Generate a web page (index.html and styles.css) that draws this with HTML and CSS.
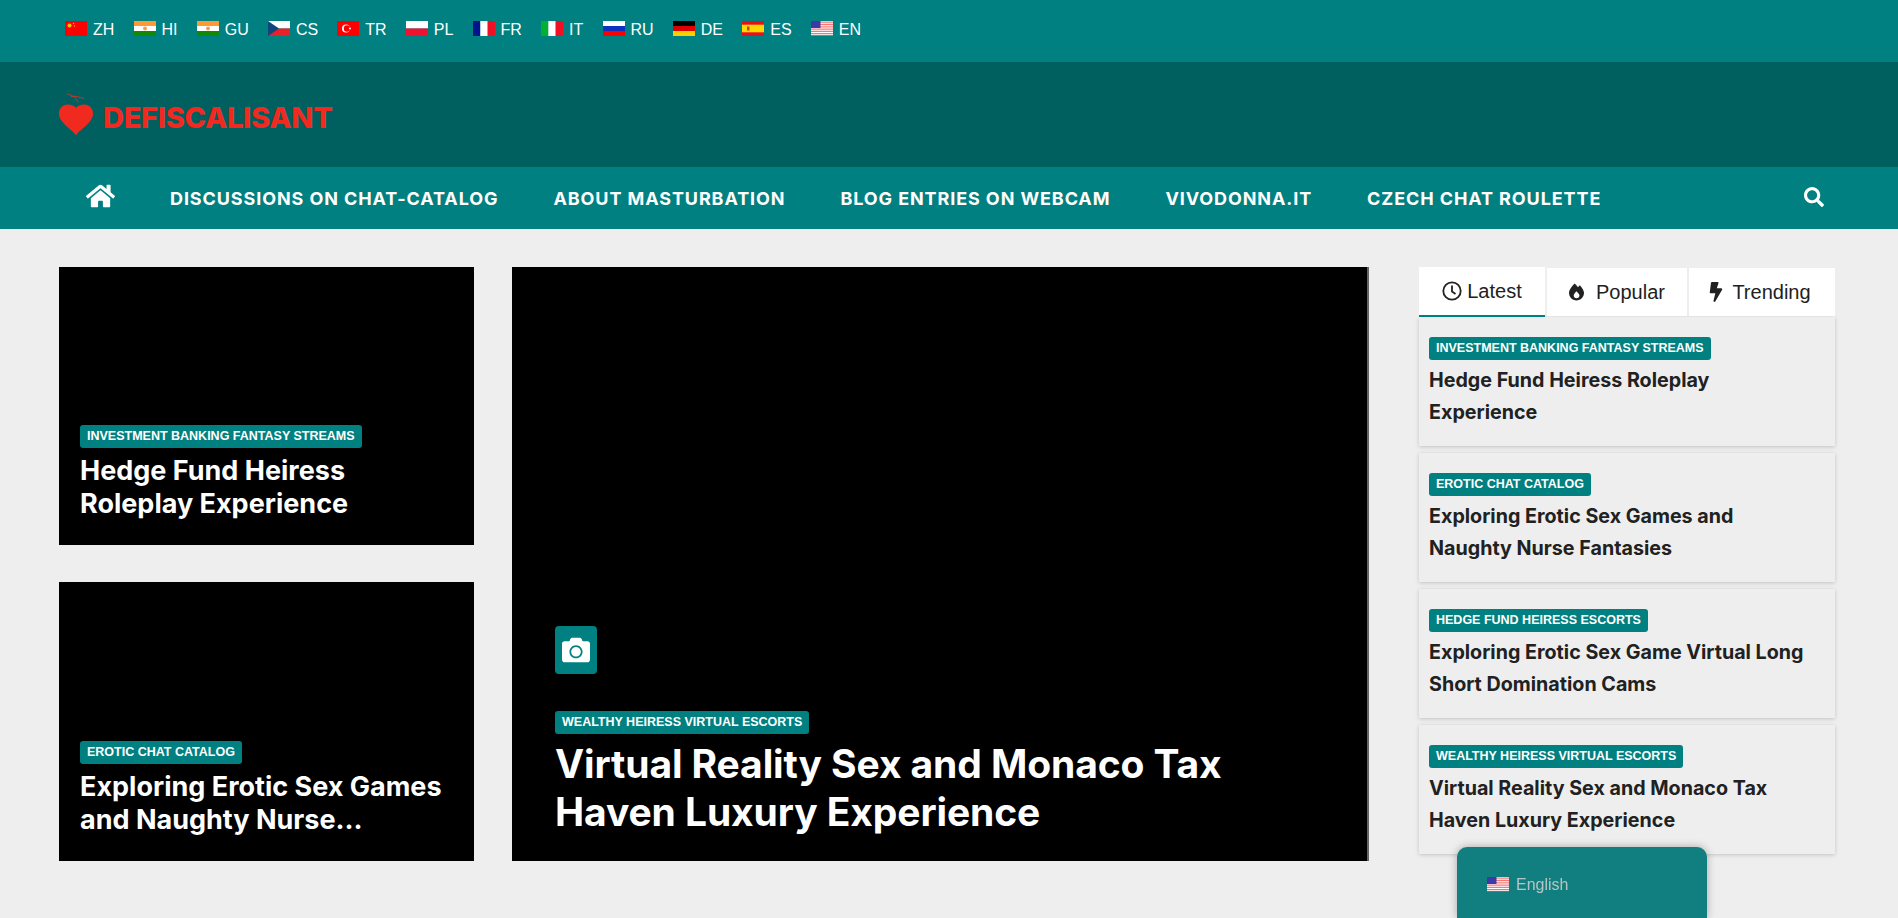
FILE: index.html
```html
<!DOCTYPE html>
<html lang="en">
<head>
<meta charset="utf-8">
<title>Defiscalisant</title>
<link rel="stylesheet" href="styles.css">
</head>
<body>
<div class="langbar">
  <a class="lang"><svg class="flag" viewBox="0 0 22 15"><rect width="22" height="15" fill="#f00"/><circle cx="4.5" cy="4.5" r="2" fill="#f5c400"/><circle cx="8.5" cy="2.5" r=".7" fill="#f5c400"/><circle cx="9.5" cy="5" r=".7" fill="#f5c400"/></svg>ZH</a>
  <a class="lang"><svg class="flag" viewBox="0 0 22 15"><rect width="22" height="5" fill="#f93"/><rect y="5" width="22" height="5" fill="#fff"/><rect y="10" width="22" height="5" fill="#128807"/><circle cx="11" cy="7.5" r="2" fill="#f0a050"/></svg>HI</a>
  <a class="lang"><svg class="flag" viewBox="0 0 22 15"><rect width="22" height="5" fill="#f93"/><rect y="5" width="22" height="5" fill="#fff"/><rect y="10" width="22" height="5" fill="#128807"/><circle cx="11" cy="7.5" r="2" fill="#f0a050"/></svg>GU</a>
  <a class="lang"><svg class="flag" viewBox="0 0 22 15"><rect width="22" height="7.5" fill="#fff"/><rect y="7.5" width="22" height="7.5" fill="#e8202a"/><path d="M0 0L11 7.5L0 15Z" fill="#11457e"/></svg>CS</a>
  <a class="lang"><svg class="flag" viewBox="0 0 22 15"><rect width="22" height="15" fill="#f00"/><circle cx="9" cy="7.5" r="4" fill="#fff"/><circle cx="10" cy="7.5" r="3.2" fill="#f00"/><circle cx="13" cy="7.5" r="1" fill="#fff"/></svg>TR</a>
  <a class="lang"><svg class="flag" viewBox="0 0 22 15"><rect width="22" height="7.5" fill="#fff"/><rect y="7.5" width="22" height="7.5" fill="#f01030"/></svg>PL</a>
  <a class="lang"><svg class="flag" viewBox="0 0 22 15"><rect width="7.3" height="15" fill="#00148c"/><rect x="7.3" width="7.4" height="15" fill="#fff"/><rect x="14.7" width="7.3" height="15" fill="#f01024"/></svg>FR</a>
  <a class="lang"><svg class="flag" viewBox="0 0 22 15"><rect width="7.3" height="15" fill="#00b030"/><rect x="7.3" width="7.4" height="15" fill="#fff"/><rect x="14.7" width="7.3" height="15" fill="#f01024"/></svg>IT</a>
  <a class="lang"><svg class="flag" viewBox="0 0 22 15"><rect width="22" height="5" fill="#fff"/><rect y="5" width="22" height="5" fill="#1030c0"/><rect y="10" width="22" height="5" fill="#f00"/></svg>RU</a>
  <a class="lang"><svg class="flag" viewBox="0 0 22 15"><rect width="22" height="5" fill="#000"/><rect y="5" width="22" height="5" fill="#e00000"/><rect y="10" width="22" height="5" fill="#ffce00"/></svg>DE</a>
  <a class="lang"><svg class="flag" viewBox="0 0 22 15"><rect width="22" height="15" fill="#e81020"/><rect y="3.7" width="22" height="7.6" fill="#ffd800"/><rect x="5" y="5.5" width="2.5" height="4" fill="#c84020"/></svg>ES</a>
  <a class="lang"><svg class="flag" viewBox="0 0 22 15"><rect width="22" height="15" fill="#fff"/><path d="M0 1.2h22M0 3.5h22M0 5.8h22M0 8.1h22M0 10.4h22M0 12.7h22" stroke="#f47878" stroke-width="1.3"/><rect width="9.5" height="7" fill="#3a3aa8"/><rect y="14.2" width="22" height=".8" fill="#c04040"/></svg>EN</a>
</div>

<header class="brandbar">
  <a class="logo">
    <svg class="logo-mark" viewBox="0 0 34 43"><path d="M8 1c5 1 9 3 11 8.5M12 3.5c4-1 9 1 13 2" fill="none" stroke="#c9352d" stroke-width="1"/><path d="M17 42.5C13 36 0 30 0 20.5 0 15 4 11.5 8.500 11.500c4 0 7 1.500 8.500 3.500 1.500-2 4.500-3.500 8.500-3.500 4.500 0 8.500 3.500 8.500 9 0 9.500-13 15.500-17 22z" fill="#f12a20"/></svg>
    <span class="logo-text">DEFISCALISANT</span>
  </a>
</header>

<nav class="mainnav">
  <svg class="nav-home" viewBox="0 0 576 512"><path d="M280.37 148.26L96 300.11V464a16 16 0 0 0 16 16l112.06-.29a16 16 0 0 0 15.92-16V368a16 16 0 0 1 16-16h64a16 16 0 0 1 16 16v95.64a16 16 0 0 0 16 16.05L464 480a16 16 0 0 0 16-16V300L295.67 148.26a12.19 12.19 0 0 0-15.3 0zM571.6 251.47L488 182.56V44.05a12 12 0 0 0-12-12h-56a12 12 0 0 0-12 12v72.61L318.47 43a48 48 0 0 0-61 0L4.34 251.47a12 12 0 0 0-1.6 16.9l25.5 31A12 12 0 0 0 45.15 301l235.22-193.74a12.19 12.19 0 0 1 15.3 0L530.9 301a12 12 0 0 0 16.9-1.6l25.5-31a12 12 0 0 0-1.7-16.93z"/></svg>
  <a class="nav-link">DISCUSSIONS ON CHAT-CATALOG</a>
  <a class="nav-link">ABOUT MASTURBATION</a>
  <a class="nav-link">BLOG ENTRIES ON WEBCAM</a>
  <a class="nav-link">VIVODONNA.IT</a>
  <a class="nav-link">CZECH CHAT ROULETTE</a>
  <svg class="nav-search" viewBox="0 0 512 512"><path d="M505 442.7L405.3 343c-4.5-4.5-10.600-7-17-7H372c27.600-35.300 44-79.700 44-128C416 93.100 322.900 0 208 0S0 93.100 0 208s93.100 208 208 208c48.300 0 92.700-16.400 128-44v16.300c0 6.400 2.500 12.500 7 17l99.700 99.700c9.400 9.400 24.600 9.400 33.900 0l28.300-28.300c9.400-9.400 9.400-24.600.1-34zM208 336c-70.700 0-128-57.200-128-128 0-70.700 57.200-128 128-128 70.700 0 128 57.200 128 128 0 70.700-57.200 128-128 128z"/></svg>
</nav>

<main class="content">
  <div class="col-left">
    <article class="tile">
      <span class="badge">INVESTMENT BANKING FANTASY STREAMS</span>
      <h3 class="tile-title">Hedge Fund Heiress Roleplay Experience</h3>
    </article>
    <article class="tile">
      <span class="badge">EROTIC CHAT CATALOG</span>
      <h3 class="tile-title">Exploring Erotic Sex Games and Naughty Nurse...</h3>
    </article>
  </div>

  <article class="hero">
    <span class="hero-cam"><svg viewBox="0 0 512 512"><path d="M512 144v288c0 26.500-21.500 48-48 48H48c-26.500 0-48-21.500-48-48V144c0-26.500 21.500-48 48-48h88l12.300-32.900c7-18.700 24.900-31.100 44.900-31.100h125.500c20 0 37.900 12.400 44.900 31.100L376 96h88c26.500 0 48 21.500 48 48zM376 288c0-66.200-53.800-120-120-120s-120 53.800-120 120 53.800 120 120 120 120-53.800 120-120zm-32 0c0 48.500-39.500 88-88 88s-88-39.500-88-88 39.500-88 88-88 88 39.500 88 88z"/></svg></span>
    <span class="badge">WEALTHY HEIRESS VIRTUAL ESCORTS</span>
    <h2 class="hero-title">Virtual Reality Sex and Monaco Tax Haven Luxury Experience</h2>
  </article>

  <aside class="side">
    <div class="tabs">
      <a class="tab tab-active"><svg class="tab-icon" viewBox="0 0 20 20"><circle cx="10" cy="10" r="8.700" fill="none" stroke="#212121" stroke-width="1.800"/><path d="M10 4.500V10.500L13.500 13" fill="none" stroke="#212121" stroke-width="1.800"/></svg>Latest</a>
      <a class="tab tab-pop"><svg class="tab-icon" viewBox="0 0 448 512"><path fill-rule="evenodd" d="M323.56 51.200c-20.800 19.300-39.580 39.590-56.220 59.970C240.080 73.620 206.280 35.530 168 0 69.740 91.170 0 209.960 0 281.600 0 408.850 100.290 512 224 512s224-103.150 224-230.400c0-53.270-51.980-163.140-124.440-230.400zM226 440c-52 0-86-34-86-82 0-34 30-70 82-128 48 54 90 92 90 128 0 48-34 82-86 82z"/></svg>Popular</a>
      <a class="tab tab-trend"><svg class="tab-icon" viewBox="0 0 320 512"><path d="M296 160H180.600l42.600-129.800C227.200 15 215.700 0 200 0H56C44 0 33.800 8.900 32.200 20.800l-32 240C-1.700 275.200 9.500 288 24 288h118.700L96.600 482.500c-3.600 15.200 8 29.500 23.300 29.500 8.400 0 16.400-4.400 20.800-12l176-304c9.300-15.900-2.200-36-20.700-36z"/></svg>Trending</a>
    </div>
    <article class="post">
      <span class="badge">INVESTMENT BANKING FANTASY STREAMS</span>
      <h4 class="post-title">Hedge Fund Heiress Roleplay Experience</h4>
    </article>
    <article class="post">
      <span class="badge">EROTIC CHAT CATALOG</span>
      <h4 class="post-title">Exploring Erotic Sex Games and Naughty Nurse Fantasies</h4>
    </article>
    <article class="post">
      <span class="badge">HEDGE FUND HEIRESS ESCORTS</span>
      <h4 class="post-title">Exploring Erotic Sex Game Virtual Long Short Domination Cams</h4>
    </article>
    <article class="post">
      <span class="badge">WEALTHY HEIRESS VIRTUAL ESCORTS</span>
      <h4 class="post-title">Virtual Reality Sex and Monaco Tax Haven Luxury Experience</h4>
    </article>
  </aside>
</main>

<div class="lang-widget">
  <svg class="flag" viewBox="0 0 22 15"><rect width="22" height="15" fill="#fff"/><path d="M0 1.200h22M0 3.500h22M0 5.800h22M0 8.100h22M0 10.400h22M0 12.700h22" stroke="#f47878" stroke-width="1.300"/><rect width="9.500" height="7" fill="#3a3aa8"/><rect y="14.200" width="22" height=".8" fill="#c02020"/></svg>
  <span>English</span>
</div>
</body>
</html>
```

FILE: styles.css
```css
* { box-sizing: border-box; }
html, body { margin: 0; padding: 0; }
body {
  height: 918px;
  overflow: hidden;
  background: #eeeeee;
  font-family: "Liberation Sans", Arial, sans-serif;
  color: #212121;
}
h2, h3, h4 { margin: 0; }

.langbar {
  height: 62px;
  background: #008080;
  display: flex;
  align-items: center;
  gap: 19.200px;
  padding: 0 0 3px 65px;
}
.lang {
  display: flex;
  align-items: center;
  color: #fff;
  font-size: 16px;
}
.flag { width: 22px; height: 15px; margin-right: 6px; flex: none; }
.lang .flag { margin-top: -2px; }

.brandbar {
  height: 105px;
  background: #005f5f;
  display: flex;
  align-items: center;
  padding-left: 59px;
}
.logo { display: flex; align-items: flex-end; }
.logo-mark { width: 34px; height: 43px; margin-right: 10px; }
.logo-text {
  font-family: Inter, sans-serif;
  font-weight: 800;
  font-size: 29px;
  letter-spacing: -.3px;
  line-height: 36px;
  color: #f02a20;
}

.mainnav {
  height: 62px;
  background: #008080;
  display: flex;
  align-items: center;
  gap: 55px;
  padding-left: 86px;
  padding-right: 74px;
}
.nav-home { width: 29px; height: 26px; fill: #fff; margin-top: -4px; }
.nav-link {
  font-family: Inter, sans-serif;
  font-weight: 700;
  font-size: 18px;
  letter-spacing: .9px;
  color: #fff;
  white-space: nowrap;
}
.nav-search { width: 20px; height: 20px; fill: #fff; margin-left: auto; margin-top: -2px; }

.content {
  display: grid;
  grid-template-columns: 415px 857px 416px;
  column-gap: 38px;
  padding: 38px 0 0 59px;
}
.col-left { display: flex; flex-direction: column; gap: 37px; }
.tile {
  height: 278px;
  background: #000;
  display: flex;
  flex-direction: column;
  justify-content: flex-end;
  align-items: flex-start;
  padding: 0 21px 25px;
}
.tile + .tile { height: 279px; }
.badge {
  display: inline-block;
  height: 23px;
  line-height: 23px;
  padding: 0 7px;
  border-radius: 3px;
  background: #008080;
  color: #fff;
  font-size: 12.500px;
  font-weight: 700;
  white-space: nowrap;
}
.tile-title {
  margin-top: 6px;
  font-family: Inter, sans-serif;
  font-weight: 700;
  font-size: 27px;
  line-height: 33px;
  color: #fff;
}

.hero {
  height: 594px;
  background: #000;
  border-right: 2px solid #666;
  display: flex;
  flex-direction: column;
  justify-content: flex-end;
  align-items: flex-start;
  padding: 0 43px 25px;
}
.hero-cam {
  width: 42px;
  height: 48px;
  border-radius: 4px;
  background: #008080;
  display: flex;
  align-items: center;
  justify-content: center;
  margin-bottom: 37px;
}
.hero-cam svg { width: 28px; height: 28px; fill: #fff; }
.hero-title {
  margin-top: 6px;
  font-family: Inter, sans-serif;
  font-weight: 700;
  font-size: 39px;
  letter-spacing: -.1px;
  line-height: 48px;
  color: #fff;
}

.side { margin-left: 12px; width: 416px; }
.tabs { display: flex; gap: 2px; height: 50px; align-items: flex-start; }
.tab {
  display: flex;
  align-items: center;
  justify-content: center;
  background: #fff;
  font-size: 20px;
  height: 48px;
  margin-top: 1px;
  color: #212121;
}
.tab-active { width: 126px; height: 50px; margin-top: 0; border-bottom: 2px solid #008080; }
.tab-pop { width: 140px; }
.tab-trend { width: 146px; padding-right: 4px; }
.tab-icon { width: 20px; height: 20px; fill: #212121; margin-right: 5px; }
.tab-pop .tab-icon { width: 15px; margin-right: 12px; }
.tab-trend .tab-icon { width: 14px; margin-right: 9px; }

.post {
  height: 129px;
  margin-bottom: 7px;
  padding: 20px 26px 0 10px;
  background: #eeeeee;
  box-shadow: 0 1px 4px rgba(0, 0, 0, .18);
}
.post-title {
  margin-top: 5px;
  font-family: Inter, sans-serif;
  font-weight: 700;
  font-size: 19.700px;
  line-height: 31.500px;
  color: #212121;
}

.lang-widget {
  position: fixed;
  left: 1457px;
  bottom: 0;
  width: 250px;
  height: 71px;
  background: #117f7f;
  border-radius: 10px 10px 0 0;
  box-shadow: 0 0 8px rgba(0, 0, 0, .3);
  padding: 29px 0 0 30px;
  display: flex;
  align-items: flex-start;
  color: #b8c4c4;
  font-size: 16px;
}
.lang-widget .flag { margin-right: 7px; margin-top: 1px; }
```
